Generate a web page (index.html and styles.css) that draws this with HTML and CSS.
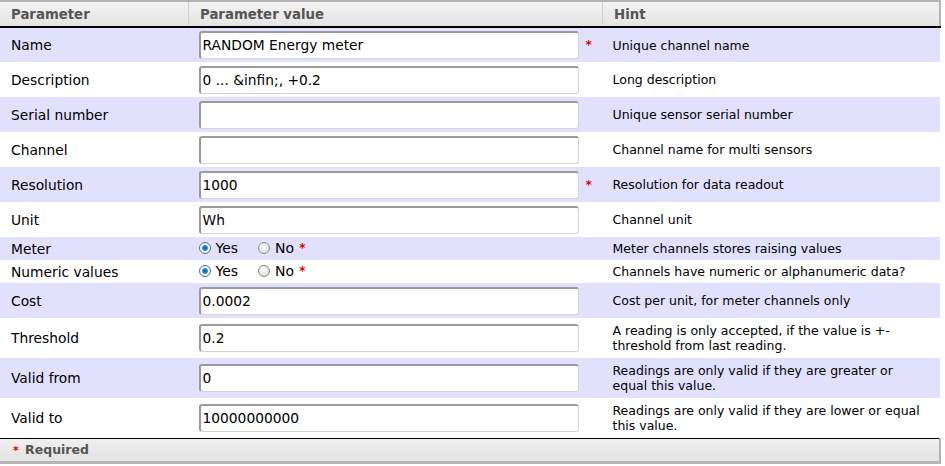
FILE: index.html
```html
<!DOCTYPE html>
<html>
<head>
<meta charset="utf-8">
<link rel="stylesheet" href="styles.css">
</head>
<body>
<table class="grid">
  <thead>
    <tr class="head"><th class="c1">Parameter</th><th class="c2">Parameter value</th><th class="c3">Hint</th></tr>
  </thead>
  <tbody>
    <tr class="alt"><td class="lbl">Name</td><td class="val"><span class="inp">RANDOM Energy meter</span><span class="req">*</span></td><td class="hint">Unique channel name</td></tr>
    <tr><td class="lbl">Description</td><td class="val"><span class="inp">0 ... &amp;infin;, +0.2</span></td><td class="hint">Long description</td></tr>
    <tr class="alt"><td class="lbl">Serial number</td><td class="val"><span class="inp"></span></td><td class="hint">Unique sensor serial number</td></tr>
    <tr><td class="lbl">Channel</td><td class="val"><span class="inp"></span></td><td class="hint">Channel name for multi sensors</td></tr>
    <tr class="alt"><td class="lbl">Resolution</td><td class="val"><span class="inp">1000</span><span class="req">*</span></td><td class="hint">Resolution for data readout</td></tr>
    <tr><td class="lbl">Unit</td><td class="val"><span class="inp">Wh</span></td><td class="hint">Channel unit</td></tr>
    <tr class="alt short"><td class="lbl">Meter</td><td class="val"><span class="radios"><span class="radio on"></span><span class="rtxt">Yes</span><span class="radio"></span><span class="rtxt">No</span><span class="req small">*</span></span></td><td class="hint">Meter channels stores raising values</td></tr>
    <tr class="short"><td class="lbl">Numeric values</td><td class="val"><span class="radios"><span class="radio on"></span><span class="rtxt">Yes</span><span class="radio"></span><span class="rtxt">No</span><span class="req small">*</span></span></td><td class="hint">Channels have numeric or alphanumeric data?</td></tr>
    <tr class="alt"><td class="lbl">Cost</td><td class="val"><span class="inp">0.0002</span></td><td class="hint">Cost per unit, for meter channels only</td></tr>
    <tr class="tall"><td class="lbl">Threshold</td><td class="val"><span class="inp">0.2</span></td><td class="hint">A reading is only accepted, if the value is +-<br>threshold from last reading.</td></tr>
    <tr class="alt tall"><td class="lbl">Valid from</td><td class="val"><span class="inp">0</span></td><td class="hint">Readings are only valid if they are greater or<br>equal this value.</td></tr>
    <tr class="tall"><td class="lbl">Valid to</td><td class="val"><span class="inp">10000000000</span></td><td class="hint">Readings are only valid if they are lower or equal<br>this value.</td></tr>
  </tbody>
  <tfoot>
    <tr class="footrow"><td colspan="3" class="foot"><span class="req">*</span> Required</td></tr>
  </tfoot>
</table>
</body>
</html>
```
FILE: styles.css
```css
html, body { margin: 0; padding: 0; background: #fff; }
body { font-family: "DejaVu Sans", Verdana, sans-serif; font-size: 13.8px; color: #000; }
.grid { width: 941px; border-collapse: collapse; table-layout: fixed; }
.grid tr { height: 35px; }
.grid tr.head { height: 26px; }
.grid tr.short { height: 23px; }
.grid tr.tall { height: 40px; }
.grid tr.footrow { height: 24px; }
.grid th {
  padding: 0 0 0 11px; text-align: left; font-weight: bold; font-size: 13.3px; color: #555;
  background: linear-gradient(#f2f2f2, #e4e4e4);
  border-top: 2px solid #b4b4b4; border-bottom: 2px solid #000;
  border-left: 1px solid #d0d0d0;
}
.grid th.c1 { width: 177px; border-left: none; }
.grid th.c2 { width: 402px; }
.grid th.c3 { border-right: 2px solid #b4b4b4; }
.grid td { padding: 0; vertical-align: middle; }
.grid tr.alt td { background: #e1e1fe; }
.lbl { padding-left: 11px !important; }
.val { padding-left: 10px !important; white-space: nowrap; }
.hint { padding-left: 10px !important; line-height: 15px; font-size: 12.5px; }
.inp {
  display: inline-block; box-sizing: border-box; width: 380px; height: 28px; vertical-align: middle;
  background: #fff; border: 1px solid #d4d4d4; border-top: 2px solid #9a9a9a; border-left: 2px solid #9a9a9a;
  border-radius: 3px; padding: 0 2px; line-height: 24px; font-size: 13.8px;
}
.req { color: #e00000; font-weight: bold; margin-left: 7px; font-size: 12px; vertical-align: middle; }
.req.small { margin-left: 5px; }
.radios { display: inline-flex; align-items: center; font-size: 14px; }
.radio {
  width: 12px; height: 12px; border-radius: 50%; box-sizing: border-box;
  border: 1px solid #8a8a8a; background: radial-gradient(circle at 40% 35%, #fff, #d6d6d6);
  margin-right: 5px;
}
.radio.on { background: radial-gradient(circle, #0d5e9c 0, #2a8fd0 2.5px, #fff 3.5px, #e4e4e4 100%); border-color: #4b6f8c; }
.rtxt { margin-right: 20px; }
.rtxt + .radio + .rtxt { margin-right: 0; }
.foot {
  padding-left: 13px !important; font-weight: bold; color: #555; font-size: 12.5px;
  background: linear-gradient(#f0f0f0, #e2e2e2);
  border-top: 1px solid #000; border-bottom: 3px solid #b4b4b4; border-right: 2px solid #b4b4b4;
}
.foot .req { margin-left: 0; margin-right: 2px; font-size: 11px; }
```
